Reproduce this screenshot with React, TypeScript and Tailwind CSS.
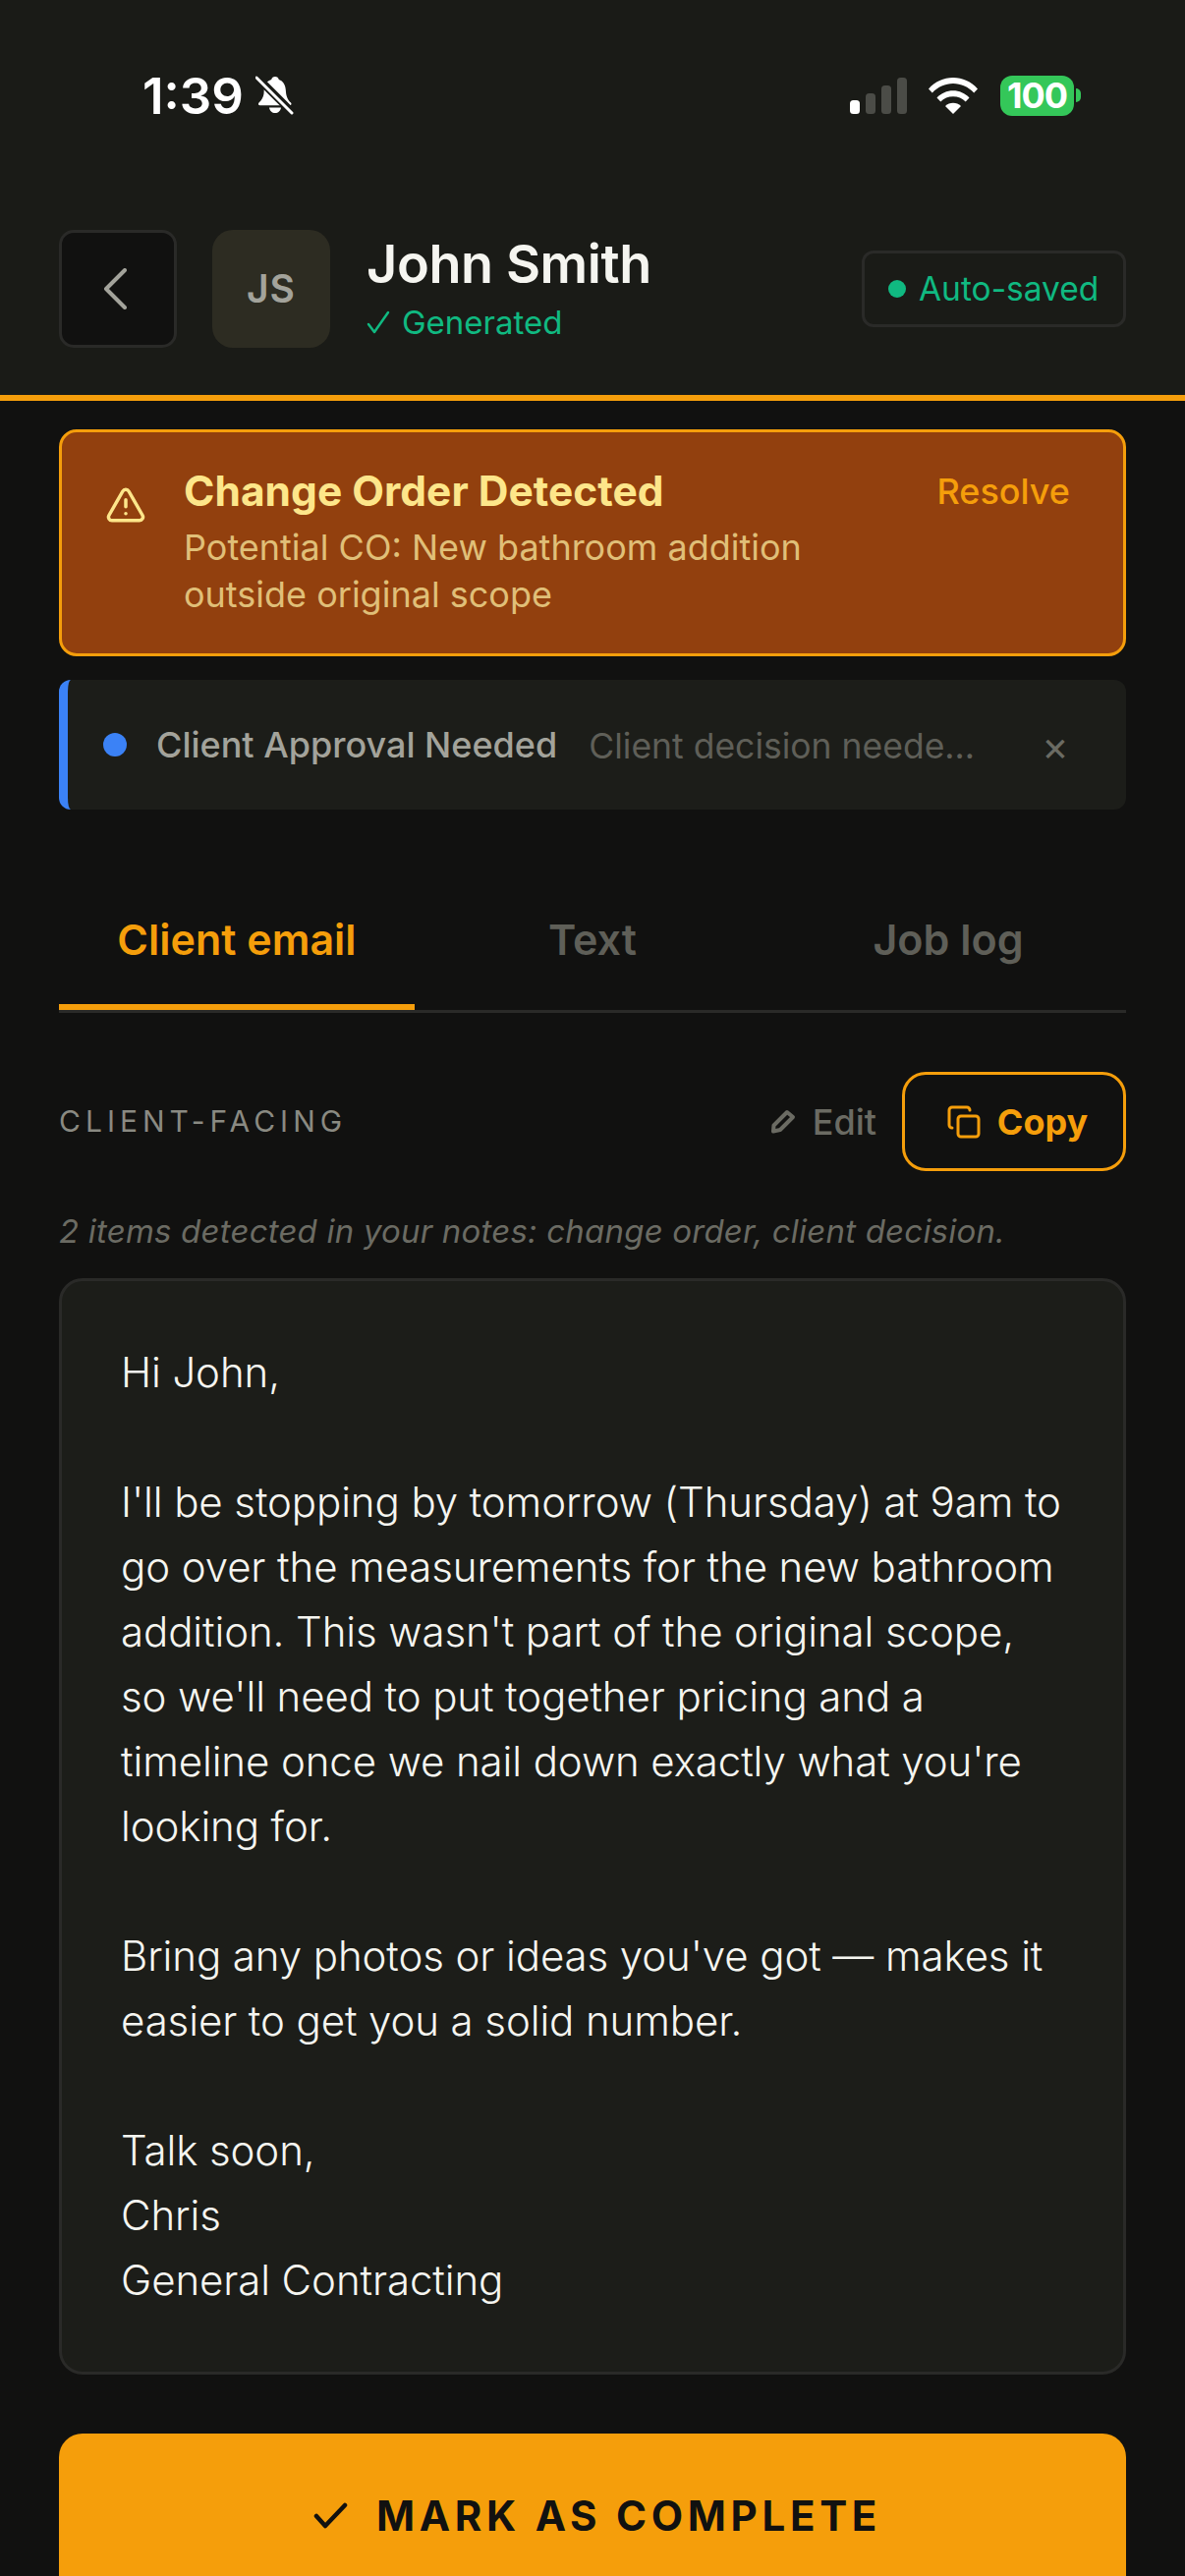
import React from 'react';
import { Copy, TriangleAlert } from 'lucide-react';

const SignalBars = () => (
  <svg width="58" height="37" viewBox="0 0 58 37">
    <rect x="0" y="23" width="10" height="14" rx="3.5" fill="#fff" />
    <rect x="16" y="16" width="10" height="21" rx="3.5" fill="#4b4c47" />
    <rect x="32" y="8" width="10" height="29" rx="3.5" fill="#4b4c47" />
    <rect x="48" y="0" width="10" height="37" rx="3.5" fill="#4b4c47" />
  </svg>
);

const Wifi = () => (
  <svg width="50" height="37" viewBox="0 0 50 37" fill="#fff">
    <path d="M0 11.500C6.500 4 15.500 0 25 0s18.500 4 25 11.500l-3.800 4C40.500 9.500 33 6 25 6S9.500 9.500 3.800 15.500z" />
    <path d="M8.500 20.500C12.800 16 18.700 13.300 25 13.300s12.200 2.700 16.500 7.200l-3.800 4C34.400 21 29.900 19.200 25 19.200s-9.400 1.800-12.700 5.300z" />
    <path d="M17 29c2.200-2 5-3.200 8-3.200s5.800 1.200 8 3.200l-8 8z" />
  </svg>
);

const MutedBell = () => (
  <svg width="40" height="40" viewBox="0 0 40 40">
    <path d="M20 1c2 0 3.400 1.200 3.800 3 4.500 1.500 6.700 5.500 7 10.500.3 5 1.200 9.500 5.200 13 1 1 .5 2.800-1 2.800H4.500c-1.500 0-2.100-1.700-1-2.800 3-2.700 4.400-5.700 5-9L9 9.500C10.500 7 13 5 16.200 4 16.600 2.200 18 1 20 1z" fill="#fff" />
    <path d="M14 32.500h12c-.4 3.500-3 5.500-6 5.500s-5.600-2-6-5.500z" fill="#fff" />
    <path d="M1 1l36 36" stroke="#1a1b17" strokeWidth="8" />
    <path d="M1 2l36 36" stroke="#fff" strokeWidth="3" strokeLinecap="round" />
  </svg>
);

const BackChevron = () => (
  <svg width="24" height="42" viewBox="0 0 24 42" fill="none" stroke="#a3a39b" strokeWidth="4" strokeLinecap="round" strokeLinejoin="round">
    <path d="M22 2L3 21l19 19" />
  </svg>
);

const Pencil = () => (
  <svg width="26" height="26" viewBox="0 0 26 26" fill="none" stroke="#6b6b63" strokeWidth="4" strokeLinejoin="round">
    <path d="M17 3l6 5L10 21l-7 1.500 .5-6z" />
  </svg>
);

const GeneratedCheck = () => (
  <svg width="24" height="24" viewBox="0 0 24 24" fill="none" stroke="#10b981" strokeWidth="2.500" strokeLinecap="round" strokeLinejoin="round">
    <path d="M2 14l6 8L22 2" />
  </svg>
);

const CompleteCheck = () => (
  <svg width="35" height="27" viewBox="0 0 35 27" fill="none" stroke="#111110" strokeWidth="4.500" strokeLinecap="round" strokeLinejoin="round">
    <path d="M3 14l9 10L32 3" />
  </svg>
);

export default function App() {
  return (
    <div className="flex h-[2622px] w-[1206px] flex-col overflow-hidden bg-[#111110] font-['Inter',sans-serif]">
      {/* Header */}
      <header className="h-[408px] shrink-0 border-b-[6px] border-[#f59e0b] bg-[#1a1b17] px-[60px]">
        <div className="flex h-[234px] items-start justify-between pt-[72px] pl-[85px] pr-[46px]">
          <div className="flex h-[50px] items-center gap-[12px]">
            <span className="text-[51px] leading-none font-semibold text-white">1:39</span>
            <MutedBell />
          </div>
          <div className="flex h-[50px] items-center">
            <SignalBars />
            <span className="ml-[22px]"><Wifi /></span>
            <div className="ml-[23px] flex h-[41px] w-[75px] items-center justify-center rounded-[12px] bg-[#34c759] text-[36px] font-bold tracking-[-1px] text-white">100</div>
            <div className="ml-[2px] h-[14px] w-[5px] rounded-r-full bg-[#34c759]" />
          </div>
        </div>
        <div className="flex items-center">
          <div className="flex h-[120px] w-[120px] items-center justify-center rounded-[15px] border-[3px] border-[#2a2a28] bg-[#111110]">
            <span className="-ml-[6px]"><BackChevron /></span>
          </div>
          <div className="ml-[36px] flex h-[120px] w-[120px] items-center justify-center rounded-[21px] bg-[#2d2c22] text-[39px] font-semibold tracking-[1px] text-[#a3a39b]">JS</div>
          <div className="ml-[37px] pb-[4px]">
            <div className="text-[54px] leading-[66px] font-semibold tracking-[-0.4px] text-[#f5f5f0]">John Smith</div>
            <div className="mt-[5px] flex items-center gap-[12px] text-[33px] leading-[42px] text-[#10b981]">
              <GeneratedCheck />
              Generated
            </div>
          </div>
          <div className="ml-auto flex h-[78px] w-[269px] items-center gap-[13px] rounded-[12px] border-[3px] border-[#2a2a28] pl-[24px] text-[33.500px] text-[#10b981]">
            <span className="h-[18px] w-[18px] rounded-full bg-[#10b981]" />
            Auto-saved
          </div>
        </div>
      </header>

      <main className="flex flex-col px-[60px] pt-[29px]">
        {/* Change order banner */}
        <div className="flex h-[231px] items-start rounded-[18px] border-[3px] border-[#f59e0b] bg-[#92400e] pt-[36px] pr-[54px] pl-[44px]">
          <TriangleAlert size={42} strokeWidth={2} color="#fde68a" className="mt-[17px] shrink-0" />
          <div className="ml-[38px] flex-1">
            <div className="text-[42.500px] leading-[48px] font-bold text-[#fde68a]">Change Order Detected</div>
            <div className="mt-[9px] text-[36px] leading-[48px] text-[#e0bf78]">Potential CO: New bathroom addition<br />outside original scope</div>
          </div>
          <span className="text-[36px] leading-[48px] font-medium text-[#f59e0b]">Resolve</span>
        </div>

        {/* Client approval row */}
        <div className="mt-[24px] flex h-[132px] items-center rounded-[12px] border-l-[9px] border-[#3b82f6] bg-[#1c1d19] pl-[36px]">
          <span className="h-[24px] w-[24px] rounded-full bg-[#3b82f6]" />
          <span className="ml-[30px] text-[36px] font-medium text-[#a3a39b]">Client Approval Needed</span>
          <span className="mt-[3px] ml-[32px] text-[35.500px] text-[#5f5f58]">Client decision neede...</span>
          <span className="ml-[68px] text-[42px] text-[#6b6b63]">×</span>
        </div>

        {/* Tabs */}
        <div className="mt-[65px] flex border-b-[3px] border-[#2a2a28]">
          <div className="flex h-[139px] w-[362px] items-center justify-center border-b-[6px] border-[#f59e0b] pt-[1px] text-[43px] font-semibold text-[#f59e0b]">Client email</div>
          <div className="flex h-[139px] w-[362px] items-center justify-center pb-[5px] text-[43px] font-semibold text-[#5f5f58]">Text</div>
          <div className="flex h-[139px] w-[362px] items-center justify-center pb-[5px] text-[43px] font-semibold text-[#5f5f58]">Job log</div>
        </div>

        {/* Section header */}
        <div className="mt-[60px] flex h-[101px] items-center">
          <span className="text-[30px] tracking-[5px] text-[#8a8a82]">CLIENT-FACING</span>
          <span className="ml-auto"><Pencil /></span>
          <span className="ml-[17px] text-[36px] font-medium text-[#6b6b63]">Edit</span>
          <div className="ml-[26px] flex h-[101px] w-[228px] items-center justify-center gap-[16px] rounded-[24px] border-[3px] border-[#f59e0b] pl-[6px] text-[36px] font-bold text-[#f59e0b]">
            <Copy size={36} strokeWidth={2} />
            Copy
          </div>
        </div>
        <p className="mt-[40px] text-[33px] leading-[42px] tracking-[0.2px] text-[#6b6b63] italic">2 items detected in your notes: change order, client decision.</p>

        {/* Email body */}
        <div className="mt-[27px] h-[1116px] rounded-[24px] border-[3px] border-[#2a2a28] bg-[#1c1d19] p-[60px] text-[42px] leading-[66px] font-light tracking-[-0.1px] text-[#f5f5f0]">
          <p>Hi John,</p>
          <p className="mt-[66px]">I'll be stopping by tomorrow (Thursday) at 9am to go over the measurements for the new bathroom addition. This wasn't part of the original scope, so we'll need to put together pricing and a timeline once we nail down exactly what you're looking for.</p>
          <p className="mt-[66px]">Bring any photos or ideas you've got — makes it easier to get you a solid number.</p>
          <p className="mt-[66px]">Talk soon,<br />Chris<br />General Contracting</p>
        </div>

        {/* Footer action */}
        <div className="mt-[60px] flex h-[170px] items-center justify-center gap-[29px] rounded-[24px] bg-[#f59e0b] pb-[3px] pl-[10px] text-[42px] font-bold tracking-[4.700px] text-[#111110]">
          <CompleteCheck />
          MARK AS COMPLETE
        </div>
      </main>
    </div>
  );
}
